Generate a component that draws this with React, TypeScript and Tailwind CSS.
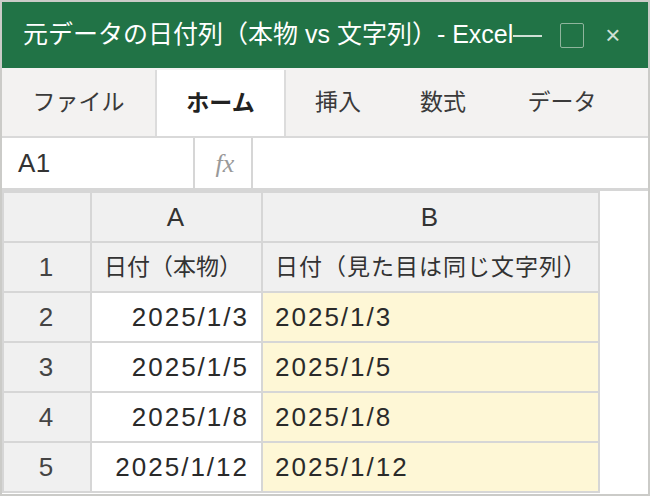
const font = "font-['Liberation_Sans','Noto_Sans_CJK_JP',sans-serif]";
const num = "text-[26px] tracking-[2px]";

const tabs = [
  { label: "ファイル", w: "w-[153px]" },
  { label: "ホーム", w: "w-[131px]", active: true },
  { label: "挿入", w: "w-[104px]" },
  { label: "数式", w: "w-[106px]" },
  { label: "データ", w: "w-[132px]" },
];

const rows = [
  { n: "2", a: "2025/1/3", b: "2025/1/3" },
  { n: "3", a: "2025/1/5", b: "2025/1/5" },
  { n: "4", a: "2025/1/8", b: "2025/1/8" },
  { n: "5", a: "2025/1/12", b: "2025/1/12" },
];

export default function App() {
  return (
    <div className={`${font} w-[650px] h-[496px] border-2 border-[#cbcbc8] bg-white flex flex-col overflow-hidden`}>
      {/* title bar */}
      <div className="h-[66px] shrink-0 bg-[#217346] flex items-center pl-[21px] text-white">
        <span className="text-[25px] whitespace-nowrap">元データの日付列（本物 vs 文字列）- Excel</span>
        <span className="shrink-0 w-[29px] h-[2px] bg-[#cfe0d5] mt-[2px]" />
        <span className="shrink-0 ml-[18px] w-[24px] h-[25px] border border-[#8fb59d] rounded-[2px]" />
        <span className="shrink-0 ml-[21px] text-[26px] leading-none text-[#cfe0d5] font-light">×</span>
      </div>

      {/* ribbon tabs */}
      <div className="h-[70px] shrink-0 bg-[#f3f2f1] flex border-b-2 border-[#d9d9d9]">
        {tabs.map((t) => (
          <div
            key={t.label}
            className={`${t.w} flex items-center justify-center text-[23px] ${
              t.active
                ? "bg-white font-bold text-[#222] border-x-2 border-[#dcdcdc] mt-[2px]"
                : "text-[#3a3a3a]"
            }`}
          >
            {t.label}
          </div>
        ))}
      </div>

      {/* formula bar */}
      <div className="h-[53px] shrink-0 flex border-b-[3px] border-[#d6d6d6]">
        <div className="w-[193px] border-r-2 border-[#d6d6d6] flex items-center pl-[16px] text-[26px] tracking-[0.5px] text-[#333]">
          A1
        </div>
        <div className="w-[58px] border-r-2 border-[#d6d6d6] flex items-center justify-center pl-[4px] text-[26px] text-[#999] italic font-['Liberation_Serif',serif]">
          fx
        </div>
        <div className="flex-1" />
      </div>

      {/* grid */}
      <div className="flex flex-1">
        <div className="grid grid-cols-[86px_169px_335px] auto-rows-[48px] gap-[2px] p-[2px] bg-[#d6d6d6] text-[23px] text-[#2a2a2a] self-start">
          <div className="bg-[#f0f0f0]" />
          <div className={`bg-[#f0f0f0] flex items-center justify-center text-[#333] ${num}`}>A</div>
          <div className={`bg-[#f0f0f0] flex items-center justify-center text-[#333] ${num}`}>B</div>

          <div className={`bg-[#f0f0f0] flex items-center justify-center text-[#444] ${num}`}>1</div>
          <div className="bg-[#f0f0f0] flex items-center pl-[12px] text-[#333]">日付（本物）</div>
          <div className="bg-[#f0f0f0] flex items-center pl-[12px] text-[#333] tracking-[1px] whitespace-nowrap">
            日付（見た目は同じ文字列）
          </div>

          {rows.map((r) => (
            <div key={r.n} className="contents">
              <div className={`bg-[#f0f0f0] flex items-center justify-center text-[#444] ${num}`}>{r.n}</div>
              <div className={`bg-white flex items-center justify-end pr-[12px] ${num}`}>{r.a}</div>
              <div className={`bg-[#fef7d6] flex items-center pl-[12px] ${num}`}>{r.b}</div>
            </div>
          ))}
        </div>
        <div className="flex-1 bg-white" />
      </div>
    </div>
  );
}
